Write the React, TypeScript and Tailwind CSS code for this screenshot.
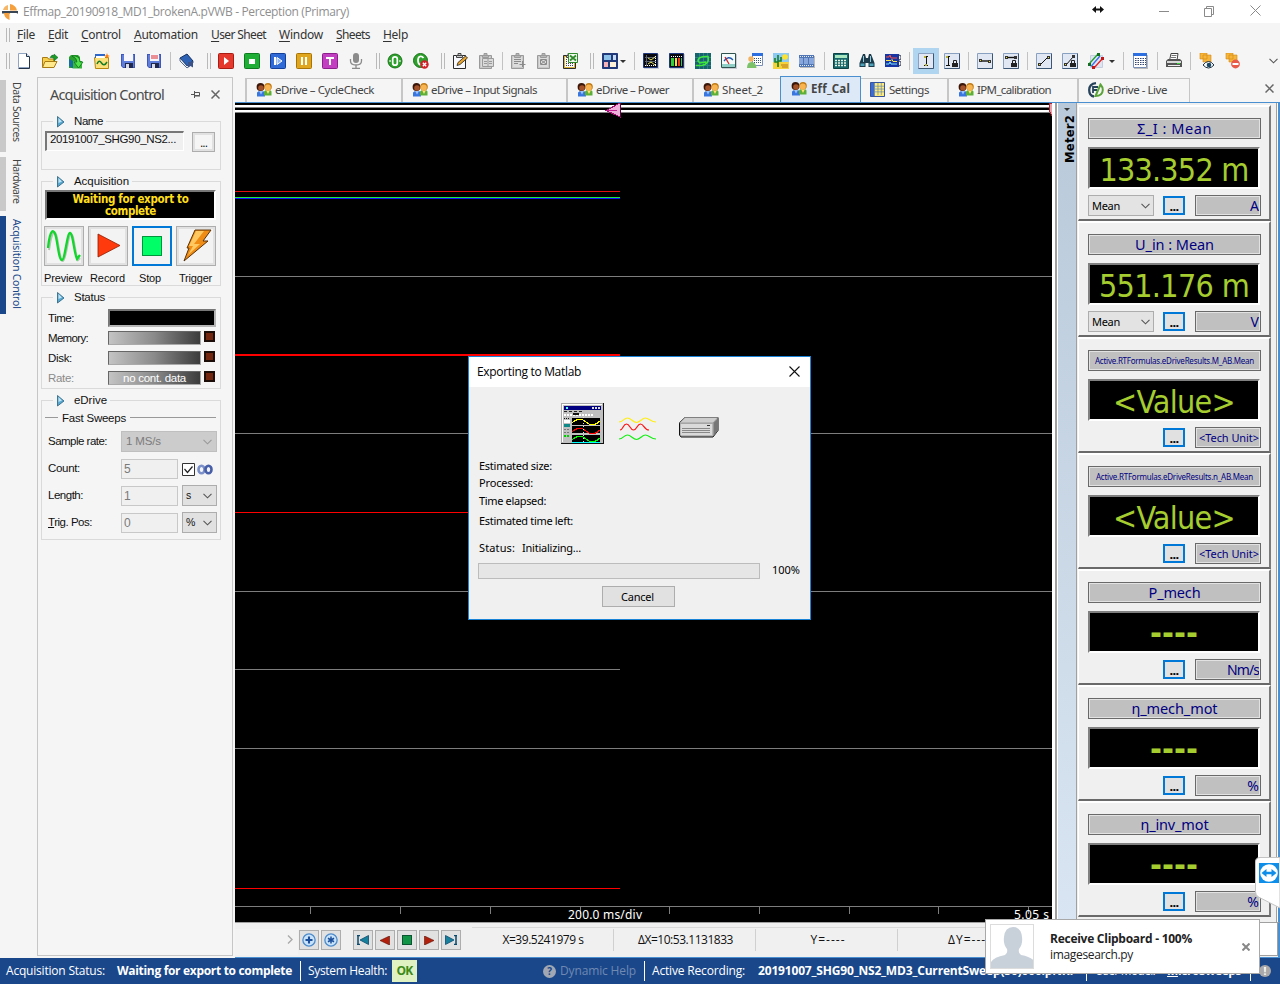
import React, { useLayoutEffect, useRef } from 'react';

const TAHOMA = "font-['Noto_Sans','DejaVu_Sans',sans-serif]";
const CONDENSED = "font-['DejaVu_Sans_Condensed','DejaVu_Sans','Noto_Sans',sans-serif]";
const SANS = "font-['Liberation_Sans',Arial,sans-serif]";
const SEGOE = "font-['Open_Sans','Noto_Sans',sans-serif]";

/* A single line of text whose tracking is adjusted so that it is w pixels long. */
function Fit({ w, className = '', children }: { w: number; className?: string; children: React.ReactNode }) {
  const ref = useRef<HTMLSpanElement>(null);
  useLayoutEffect(() => {
    const el = ref.current;
    if (!el) return;
    el.style.letterSpacing = '0px';
    const r = el.getBoundingClientRect();
    const n = (el.textContent || '').length;
    if (n > 1) el.style.letterSpacing = (w - Math.max(r.width, r.height)) / n + 'px';
  }, [w, children]);
  return (
    <span ref={ref} className={'inline-block shrink-0 whitespace-pre leading-none ' + className}>
      {children}
    </span>
  );
}

function Ico({ children, s = 16 }: { children: React.ReactNode; s?: number }) {
  return (
    <svg width={s} height={s} viewBox="0 0 16 16" className="block shrink-0">
      {children}
    </svg>
  );
}

const Floppy = ({ red }: { red?: boolean }) => (
  <Ico>
    <path d="M1 1h14v14H3l-2-2z" fill="#3f57b8" />
    <path d="M2 2h12v12H3l-1-1z" fill="#5f7ddb" />
    <path d="M4 1h9v7H4z" fill="#f6f6fc" />
    {red && <path d="M5 3h7M5 5h7" stroke="#e0282e" />}
    <path d="M5 10h8v5H5z" fill="#20284c" />
    <path d="M6 11h3v4H6z" fill="#d8dce8" />
  </Ico>
);
const Box = ({ top, bot, children }: { top: string; bot: string; children: React.ReactNode }) => (
  <Ico>
    <rect x="0.5" y="0.5" width="15" height="15" rx="1" fill={top} stroke={bot} />
    {children}
  </Ico>
);
const Clip = ({ grey, children }: { grey?: boolean; children?: React.ReactNode }) => (
  <Ico>
    <path d="M1.500 2.500h12v13h-12z" fill={grey ? '#c8c8c8' : '#d9b23a'} stroke={grey ? '#9a9a9a' : '#2b2b2b'} />
    <path d="M3 4h9v10H3z" fill={grey ? '#dcdcdc' : '#f8f9fd'} />
    <path d="M4.500 2.500h6v2h-6zM6 .5h3v2H6z" fill={grey ? '#b8b8b8' : '#ccc'} stroke={grey ? '#9a9a9a' : '#444'} />
    {children}
  </Ico>
);
const Cursor = ({ children, lock }: { children: React.ReactNode; lock?: boolean }) => (
  <Ico>
    <path d="M.5.5h15v15H.5z" fill="#e1e8f3" stroke="#8aa0c0" />
    <path d="M.5 15.500h15V.5" fill="none" stroke="#3c5676" />
    {children}
    {lock && (
      <>
        <path d="M8 10h6v4H8z" fill="#222" />
        <path d="M9.500 10V7.500h3V10" fill="none" stroke="#222" />
      </>
    )}
  </Ico>
);
const Screen = ({ children, c = '#07090f', b = '#20397e' }: { children: React.ReactNode; c?: string; b?: string }) => (
  <Ico>
    <path d="M1 1h15v15H1z" fill="#c9ccd4" />
    <path d="M.5.5h14v14H.5z" fill={c} stroke={b} />
    {children}
  </Ico>
);
const People = () => (
  <Ico>
    <path d="M1 14.500V10.500L3 9h4l2 1.500v4z" fill="#3a76e0" />
    <path d="M8 13.500V9.500L10 8h4l1.500 1.500v4z" fill="#5cb038" />
    <path d="M10 8h4l-2 4z" fill="#ffe27a" />
    <path d="M3 9h4l-2 3.500z" fill="#9dc4f5" />
    <circle cx="4.500" cy="5" r="3.900" fill="#3a1608" />
    <circle cx="5" cy="6" r="2.800" fill="#a3522a" />
    <circle cx="12" cy="4.800" r="3.800" fill="#c07a14" />
    <circle cx="11.800" cy="5.400" r="3" fill="#f7b450" />
  </Ico>
);

const icons: Record<string, React.ReactNode> = {
  newdoc: (
    <Ico>
      <path d="M2.500.5h8l3 3v11h-11z" fill="#fff" stroke="#8fa5c2" />
      <path d="M10.500.5v3h3" fill="#cfdcee" stroke="#24364e" />
      <path d="M13.500 4v11.500h-11" fill="none" stroke="#25344b" />
    </Ico>
  ),
  open: (
    <Ico>
      <path d="M.5 14V4.500h5l1 1.500H12v8z" fill="#f7cf4b" stroke="#a87a13" />
      <path d="M.5 14.500L3 8.500h12l-3 6z" fill="#ffe98c" stroke="#a87a13" />
      <path d="M8 4.500Q10 1 12 2.500V1l4 3.500L12 8V5.500Q10 4 8 4.500z" fill="#1b9a28" stroke="#08611a" strokeWidth=".5" />
    </Ico>
  ),
  import: (
    <Ico>
      <path d="M1 4l2-2h7l2 2v11H1z" fill="#2ba02f" />
      <path d="M1 6l4 2v7.500L1 13z" fill="#176e9c" />
      <path d="M5 8h9v7.500H5z" fill="#35b53b" />
      <path d="M4 3q8-1 8 6h3l-4.500 6L6 9h3q0-4-5-6z" fill="#4fe04a" stroke="#08611a" strokeWidth=".7" />
    </Ico>
  ),
  wavefolder: (
    <Ico>
      <path d="M.5 4.500h14v11h-13z" fill="#fbe07a" stroke="#b8860b" />
      <path d="M1 1h10v4H1z" fill="#2c67c9" />
      <path d="M2 3h9v2H2z" fill="#fff" />
      <path d="M3 11q2-5 4.500-1t5.500-1" fill="none" stroke="#167c26" strokeWidth="1.500" />
      <path d="M13 0l.8 2.200L16 3l-2.200.8L13 6l-.8-2.200L10 3l2.200-.8z" fill="#ff7a00" />
    </Ico>
  ),
  save: <Floppy />,
  saveas: <Floppy red />,
  book: (
    <Ico>
      <path d="M1 5l7-4 6 7-6 5z" fill="#2e62b4" stroke="#143060" />
      <path d="M1 5v3l7 7 6-5V8l-6 5z" fill="#e9eef6" stroke="#143060" strokeWidth=".7" />
      <path d="M9 9h5v5.500l-2.500-1.500L9 14.500z" fill="#3b5288" />
    </Ico>
  ),
  rec: <Box top="#e5392d" bot="#a81c14"><path d="M6 4v8l5-4z" fill="#fff" /></Box>,
  stop: <Box top="#1fae35" bot="#0c7a1e"><path d="M5 6h6v5H5z" fill="#fff" /></Box>,
  step: <Box top="#2f6ad6" bot="#123f99"><path d="M4 4h2v8H4z" fill="#fff" /><path d="M7 4.500v7L12 8z" fill="#8fb5f5" stroke="#fff" /></Box>,
  pause: <Box top="#e0a61d" bot="#a87406"><path d="M5 4h2v8H5zM9 4h2v8H9z" fill="#fff" /></Box>,
  trig: <Box top="#c33fc2" bot="#8d1f8d"><path d="M4 4h8v2H9v6H7V6H4z" fill="#fff" /></Box>,
  mic: (
    <Ico>
      <rect x="5" y="0" width="6" height="10" rx="3" fill="#8b8b8b" />
      <path d="M2.500 6v2q0 4 5.500 4t5.500-4V6M8 12v3M4 15.300h8" fill="none" stroke="#8b8b8b" strokeWidth="1.300" />
    </Ico>
  ),
  zero: (
    <Ico>
      <circle cx="8" cy="8" r="7" fill="#2ea12c" stroke="#187318" />
      <rect x="5.700" y="3.800" width="4.600" height="8.400" rx="2.300" fill="#2ea12c" stroke="#fff" strokeWidth="1.700" />
      <path d="M2.300 8h1.500M12.200 8h1.500" stroke="#fff" strokeWidth="1.500" />
    </Ico>
  ),
  zerox: (
    <Ico>
      <circle cx="7.500" cy="7.500" r="7" fill="#2ea12c" stroke="#187318" />
      <path d="M10.500 5Q9 3 7 3.500 5 4 5 7.500T7.500 12" fill="none" stroke="#fff" strokeWidth="1.800" />
      <circle cx="11.500" cy="11.500" r="4.200" fill="#cf2127" />
      <path d="M9.800 9.800l3.400 3.400M13.200 9.800l-3.400 3.400" stroke="#fff" strokeWidth="1.300" />
    </Ico>
  ),
  note: (
    <Ico>
      <path d="M1.500 2.500h12v13h-12z" fill="#f8f9fd" stroke="#2b2b2b" />
      <path d="M4.500 2.500h6v2h-6zM6 .5h3v2H6z" fill="#ccc" stroke="#444" />
      <path d="M5 12.500l1-3L13.500 3l2 2L8 11.500z" fill="#e9a52c" stroke="#222" strokeWidth=".8" />
    </Ico>
  ),
  pages: (
    <Clip grey>
      <path d="M4.500 5.500h11v8h-11zM10 5.500v8" fill="#dadada" stroke="#9a9a9a" />
      <path d="M6 8.500h3M6 10.500h3M11 8.500h3M11 10.500h3" stroke="#9a9a9a" />
    </Clip>
  ),
  clipadd: <Clip grey><path d="M4 6.500h7M4 8.500h7M4 10.500h4M12.500 8v6M9.500 11.500h6" stroke="#8a8a8a" /></Clip>,
  clipx: <Clip grey><path d="M4.500 6.500h6v5h-6zM5 7l5 4M10 7l-5 4" fill="none" stroke="#8a8a8a" /></Clip>,
  clipxl: (
    <Clip>
      <path d="M4 6.500h2M4 8.500h2M4 10.500h7M4 12.500h7" stroke="#444" strokeDasharray="1 1" />
      <path d="M6.500.5h9v9h-9z" fill="#f2f7ef" stroke="#2f8a2b" />
      <path d="M8 2.500l6 5M14 2.500l-6 5" stroke="#2f8a2b" strokeWidth="1.800" />
    </Clip>
  ),
  layout: (
    <Ico>
      <path d="M.5.5h15v15H.5z" fill="#22397a" stroke="#22397a" />
      <path d="M2 2h7v5H2z" fill="#8cc1ea" /><path d="M11 2h3v5h-3z" fill="#c5dcf4" />
      <path d="M2 9h4v5H2z" fill="#f6b2b6" /><path d="M8 9h6v5H8z" fill="#fff2d8" />
    </Ico>
  ),
  disp1: <Screen><path d="M3.500 2v11M2 4.500h11M2 8.500h11" stroke="#59616f" /><path d="M5 5l3 2 4-3M5 11l3-2 4 3" fill="none" stroke="#e7e35f" /><path d="M2 12.500h11M12.500 3v9" stroke="#fff" strokeDasharray="1 1" /></Screen>,
  disp2: <Screen><path d="M2 3.500h11" stroke="#fff" strokeDasharray="1 1" /><path d="M2 5h3v8H2z" fill="#2fd13a" /><path d="M6 5h2v8H6z" fill="#ffe12c" /><path d="M9 5h2v8H9z" fill="#f5351e" /><path d="M12 5h1v8h-1z" fill="#2fd13a" /></Screen>,
  disp3: <Ico><path d="M0 0h16v16H0z" fill="#16636b" /><path d="M4.500 0v16M8.500 0v16M12.500 0v16M0 4.500h16M0 8.500h16M0 12.500h16" stroke="#2c8088" /><path d="M1 12.500h6q8-2 6-9Q3 3 3 8l2 2 6-1" fill="none" stroke="#3de83a" strokeWidth="1.600" /></Ico>,
  gauge: <Screen c="#f4fbfb" b="#31534f"><path d="M1 11h13v3H1z" fill="#8fcfc8" /><path d="M3 8q4.500-6 9-1" fill="none" stroke="#2058b0" strokeWidth="1.300" /><path d="M4 4l4 7" stroke="#d92020" strokeWidth="1.300" /></Screen>,
  usertab: <Ico><path d="M5.500.5h10v12h-10z" fill="#fff" stroke="#7890b8" /><path d="M5 0h11v3H5z" fill="#2d6fe0" /><path d="M7 5.500h8M7 7.500h8M7 9.500h8" stroke="#34557f" strokeDasharray="1 1" /><circle cx="4" cy="6" r="2.700" fill="#f1b263" /><path d="M0 15q0-6 4.500-6T9.500 15z" fill="#7cc26b" /></Ico>,
  desert: <Ico><path d="M0 0h16v16H0z" fill="#8ccaf3" /><path d="M0 9h16v7H0z" fill="#f6d23a" /><circle cx="12" cy="4" r="2.800" fill="#ffe22b" /><path d="M5 2v12M2 5v4h3M8 4v4H5" fill="none" stroke="#197f25" strokeWidth="1.600" /><path d="M8 12h7M9 14h6" stroke="#b4761a" /></Ico>,
  film: <Ico><path d="M1 3h15v12H1z" fill="#bbb" /><path d="M0 2h15v12H0z" fill="#5076b6" /><path d="M1 3.500h13M1 12.500h13" stroke="#e3eaf6" strokeDasharray="1 1" /><path d="M0 5h4v6H0zM5 5h4v6H5zM10 5h5v6h-5z" fill="#86a6dc" /></Ico>,
  calc: <Ico><path d="M.5.5h15v15H.5z" fill="#17696b" stroke="#0c4445" /><path d="M2 2h12v3H2z" fill="#a8e6c0" /><path d="M2 7.500h12M2 10h12M2 12.500h12" stroke="#ecf4e4" strokeWidth="1.500" strokeDasharray="2 1" /></Ico>,
  binoc: <Ico><path d="M4 1h2l1 4h2l1-4h2l3.500 9v4h-6v-4H6.500v4h-6v-4z" fill="#1d3a4a" /><path d="M1.500 10.500h4v2.500h-4zM10.500 10.500h4v2.500h-4z" fill="#4da2bb" /><path d="M4.500 3v6M11.500 3v6" stroke="#8bcbdb" /></Ico>,
  multi: <Ico><path d="M0 1h14v13H0z" fill="#1736a4" /><path d="M1 4h3l1-2 1 3h6" fill="none" stroke="#ff5040" /><path d="M1 7.500h5l1-1 1 2h4" fill="none" stroke="#ffe64a" /><path d="M1 11h3l1-2 1 2h6" fill="none" stroke="#7ce6ff" /><path d="M14 2l2 1v3l-2 1M14 8l2 1v3l-2 1" fill="none" stroke="#333" /></Ico>,
  cur1: <Cursor><path d="M8.500 3v10M6 3.500h4M6 12.500h4" stroke="#111" /><path d="M6 3h2v2H6zM7 11h2v2H7z" fill="#b5ae31" /></Cursor>,
  cur2: <Cursor lock><path d="M4.500 3v10M2 3.500h4M2 12.500h4" stroke="#111" /><path d="M2 3h2v2H2z" fill="#b5ae31" /></Cursor>,
  cur3: <Cursor><path d="M3 8h10" stroke="#111" strokeWidth="1.400" /><path d="M2 6h3v3H2zM11 7h3v3h-3z" fill="#333" /><path d="M3 7h1v1H3zM12 8h1v1h-1z" fill="#e7df31" /></Cursor>,
  cur4: <Cursor lock><path d="M3 4.500h9" stroke="#111" strokeWidth="1.400" /><path d="M2 3h3v3H2zM11 3h3v3h-3z" fill="#333" /><path d="M3 4h1v1H3z" fill="#e7df31" /></Cursor>,
  cur5: <Cursor><path d="M4 12l8-8" stroke="#111" /><path d="M2 10h3v3H2zM11 3h3v3h-3z" fill="#333" /><path d="M3 11h1v1H3zM12 4h1v1h-1z" fill="#e7df31" /></Cursor>,
  cur6: <Cursor lock><path d="M4 12l7-8" stroke="#111" /><path d="M2 10h3v3H2zM10 2h3v3h-3z" fill="#333" /><path d="M3 11h1v1H3z" fill="#e7df31" /></Cursor>,
  slope: <Ico><path d="M2.500 2.500h12v12h-12z" fill="#dfe6f2" stroke="#c4cede" /><path d="M1 11L10 1" stroke="#1ca02c" strokeWidth="1.300" /><path d="M3 13.500L12 3" stroke="#3a6ee8" strokeWidth="1.300" /><path d="M6 15L15 5" stroke="#e82020" strokeWidth="1.300" /><path d="M0 10h3v3H0zM9 0h3v3H9z" fill="#146d20" /><path d="M4 13h3v3H4zM13 4h3v3h-3z" fill="#c01818" /></Ico>,
  table: <Ico><path d="M2 2h14v14H2z" fill="#bbb" /><path d="M1.500.5h13v14h-13z" fill="#fff" stroke="#7890b8" /><path d="M1 0h14v3H1z" fill="#2d6fe0" /><path d="M3 5.500h11M3 7.500h11M3 9.500h11M3 11.500h11" stroke="#34456f" strokeDasharray="1.500 1" /></Ico>,
  print: <Ico><path d="M5 .5h7l-1 7H3.500z" fill="#fff" stroke="#444" /><path d="M5.500 2.500h5M5 4.500h5" stroke="#777" /><path d="M0 8l2-2h12l2 2v6H0z" fill="#555" /><path d="M1 8h14v2H1z" fill="#d8d8d8" /><path d="M2 12h12v1H2z" fill="#eee" /><path d="M11 10h3v1h-3z" fill="#3d3" /></Ico>,
  eye: <Ico><path d="M1 0h7v6H1zM4 2h8v7H4z" fill="#f5b63a" stroke="#d38612" strokeWidth=".6" /><path d="M4 12q5.500-7 11 0-5.500 6-11 0z" fill="#fff" stroke="#1c2f3e" /><circle cx="10" cy="12" r="2.300" fill="#1c4a66" /></Ico>,
  noentry: <Ico><path d="M1 0h7v6H1zM4 2h8v7H4z" fill="#f5b63a" stroke="#d38612" strokeWidth=".6" /><circle cx="10.500" cy="11" r="4.400" fill="#e85a4a" /><path d="M7.500 10h6v2h-6z" fill="#fff" /></Ico>,
};

const I = (name: string, on = false) => (
  <div key={name} className={'flex h-[26px] w-[26px] shrink-0 items-center justify-center ' + (on ? 'bg-[#b0d5f0]' : '')}>
    {icons[name]}
  </div>
);
const Sep = ({ w = 'w-[7px]' }: { w?: string }) => (
  <div className={'flex shrink-0 justify-center ' + w}>
    <div className="h-[18px] w-px bg-[#c2c2c2]" />
  </div>
);
const Grip = ({ w = 'w-[13px]' }: { w?: string }) => (
  <div className={'flex shrink-0 justify-center ' + w}>
    <div className="ml-1 h-[16px] w-[4px] border-x border-[#b9b9b9]" />
  </div>
);
const Caret = () => <div className="h-0 w-0 border-x-[3px] border-t-[3px] border-x-transparent border-t-[#333]" />;
const Chevron = ({ c = '#555' }: { c?: string }) => (
  <svg width="9" height="6" viewBox="0 0 9 6" className="shrink-0"><path d="M.5.8l4 4 4-4" fill="none" stroke={c} strokeWidth="1.100" /></svg>
);

const menus: [string, number, string][] = [
  ['File', 18, 'w-[31px]'], ['Edit', 20, 'w-[33px]'], ['Control', 40, 'w-[53px]'], ['Automation', 64, 'w-[77px]'],
  ['User Sheet', 55, 'w-[68px]'], ['Window', 44, 'w-[57px]'], ['Sheets', 34, 'w-[47px]'], ['Help', 25, 'w-[38px]'],
];

function Group({ title, tw, h, children }: { title: string; tw: number; h: string; children: React.ReactNode }) {
  return (
    <section className={'mb-[11px] ml-[3px] w-[180px] border border-[#dadada] ' + h}>
      <div className="-mt-[8px] ml-[11px] flex h-[16px] w-fit items-center bg-[#f5f5f5] pl-[4px] pr-[3px]">
        <svg width="8" height="12" viewBox="0 0 8 12" className="mr-[9px] -mt-px"><path d="M.5.5v10.500L7 6z" fill="#58a8d0" stroke="#27607f" strokeWidth=".8" /><path d="M1.500 2v5L5 5.500z" fill="#bfe4f5" /></svg>
        <Fit w={tw} className="text-[11.5px]">{title}</Fit>
      </div>
      {children}
    </section>
  );
}

const Person = () => (
  <svg width="44" height="44" viewBox="0 0 44 44"><path d="M0 44v-7q3-5 14-7 3-2 2-6-4-5-3-12 1-10 9-10t9 10q1 7-3 12-1 4 2 6 11 2 14 7v7z" fill="#c8d0da" /></svg>
);

function Meter({ title, tw, ts, value, vw, unit, uw, us, combo }: {
  title: string; tw: number; ts: string; value: string; vw: number; unit: string; uw: number; us: string; combo?: boolean;
}) {
  return (
    <div className="h-[116px] w-[193px] shrink-0 border-b-2 border-l border-r-2 border-t-2 border-b-[#696969] border-l-white border-r-[#7b7b7b] border-t-white bg-[#f0f0f0] pl-[9px] pt-[11px]">
      <div className="flex h-[21px] w-[173px] items-center justify-center border border-[#696969] bg-[#c0c0c0] text-[#000080] outline outline-[#e2e2e2] -outline-offset-2">
        <Fit w={tw} className={ts}>{title}</Fit>
      </div>
      <div className={'mt-[8px] flex h-[42px] w-[172px] items-center justify-center border-2 border-b-white border-l-[#808080] border-r-white border-t-[#808080] bg-black text-[#a5cd2f] ' + CONDENSED}>
        <Fit w={vw} className={value === '----' ? 'mt-[1px] text-[32px] font-bold' : 'mt-[3px] text-[32px]'}>{value}</Fit>
      </div>
      <div className="mt-[6px] flex h-[21px] w-[173px] items-center">
        {combo ? (
          <div className="flex h-[21px] w-[66px] items-center justify-between border border-[#adadad] bg-[#e3e3e3] px-[3px] text-black">
            <Fit w={28} className="text-[11px]">Mean</Fit>
            <Chevron />
          </div>
        ) : <div className="w-[66px]" />}
        <div className="ml-[9px] flex h-[19px] w-[22px] items-end justify-center border-2 border-[#0078d7] bg-[#e1e1e1]">
          <Fit w={11} className="text-[13px] font-bold text-black">...</Fit>
        </div>
        <div className="ml-[10px] flex h-[21px] w-[66px] items-center justify-end border border-[#696969] bg-[#c0c0c0] pr-px text-[#000080] outline outline-[#e2e2e2] -outline-offset-2">
          <Fit w={uw} className={us}>{unit}</Fit>
        </div>
      </div>
    </div>
  );
}

const meters = [
  { title: 'Σ_I : Mean', tw: 75, ts: 'text-[14.5px]', value: '133.352 m', vw: 149, unit: 'A', uw: 8, us: 'text-[14px]', combo: true },
  { title: 'U_in : Mean', tw: 79, ts: 'text-[14.5px]', value: '551.176 m', vw: 150, unit: 'V', uw: 8, us: 'text-[14px]', combo: true },
  { title: 'Active.RTFormulas.eDriveResults.M_AB.Mean', tw: 159, ts: 'text-[8px]', value: '<Value>', vw: 122, unit: '<Tech Unit>', uw: 60, us: 'text-[11px]' },
  { title: 'Active.RTFormulas.eDriveResults.n_AB.Mean', tw: 157, ts: 'text-[8px]', value: '<Value>', vw: 122, unit: '<Tech Unit>', uw: 60, us: 'text-[11px]' },
  { title: 'P_mech', tw: 52, ts: 'text-[14.5px]', value: '----', vw: 48, unit: 'Nm/s', uw: 32, us: 'text-[14px]' },
  { title: 'η_mech_mot', tw: 86, ts: 'text-[14.5px]', value: '----', vw: 48, unit: '%', uw: 14, us: 'text-[14px]' },
  { title: 'η_inv_mot', tw: 68, ts: 'text-[14.5px]', value: '----', vw: 48, unit: '%', uw: 14, us: 'text-[14px]' },
];

function Tab({ w, pl, tw, label }: { w: string; pl: string; tw: number; label: string }) {
  return (
    <div className={'flex h-[24px] shrink-0 items-center border-l-2 border-t border-[#c6c6c6] pb-[1px] text-[#444] ' + w + ' ' + pl}>
      <People />
      <Fit w={tw} className="ml-[3px] text-[11.5px]">{label}</Fit>
    </div>
  );
}

function PlotArea() {
  return (
    <svg width="817" height="819" viewBox="235 103 817 819" shapeRendering="crispEdges" className="block bg-black">
      <path d="M235 105h817v2H235zM235 110h817v2H235z" fill="#fff" />
      <path d="M235 107h817v1H235zM235 112h817v1H235z" fill="#808080" />
      <path d="M235 276.500h817M235 433.500h817M235 591.500h817M235 669.500h385M235 748.500h817M235 906.500h817" stroke="#7d7d7d" />
      <path d="M310.500 907v7M400.500 907v7M490.500 907v7M580.500 907v7M669.500 907v7M759.500 907v7M849.500 907v7M938.500 907v7M1028.500 907v7" stroke="#7d7d7d" />
      <path d="M235 191.500h385" stroke="#e01010" />
      <path d="M235 197.500h385" stroke="#20e840" />
      <path d="M235 198.500h385" stroke="#1010ff" />
      <path d="M235 354h385v2H235zM235 512h385v1H235zM235 888h385v1H235z" fill="#f00" />
      <path d="M606 110.500l14-7.500v14z" fill="#f0b0dc" stroke="#a01070" />
      <path d="M606 110.500h11" stroke="#c02090" />
      <path d="M620.500 103v14" stroke="#600040" />
      <path d="M1049 103h3v13l-3-6z" fill="#e4a0a8" stroke="#b02030" />
      <text x="568" y="919" fontSize="12" fill="#fff" textLength="74" className={TAHOMA}>200.0 ms/div</text>
      <text x="1014" y="919" fontSize="12" fill="#fff" textLength="35" className={TAHOMA}>5.05 s</text>
    </svg>
  );
}

function NavBtn({ children, cls = '' }: { children: React.ReactNode; cls?: string }) {
  return <div className={'flex h-[20px] w-[20px] shrink-0 items-center justify-center border border-[#adadad] bg-[#e1e1e1] ' + cls}>{children}</div>;
}

const BigBtn = ({ on, children }: { on?: boolean; children: React.ReactNode }) => (
  <div className={'flex h-[40px] w-[40px] items-center justify-center bg-[#f3f3f3] ' + (on ? 'border-2 border-[#0078d7]' : 'border border-[#adadad] outline-2 -outline-offset-3 outline-[#e1e1e1]')}>{children}</div>
);

function StatusRow({ label, w, grey, text }: { label: string; w: number; grey?: boolean; text?: string }) {
  return (
    <div className="flex h-[20px] items-center pl-[6px]">
      <div className={'flex w-[60px] pt-[1px] ' + (grey ? 'text-[#8a8a8a]' : '')}><Fit w={w} className="text-[11.5px]">{label}</Fit></div>
      <div className="flex h-[14px] w-[93px] items-center justify-center border border-b-[#aaa] border-l-[#666] border-r-[#aaa] border-t-[#666] bg-linear-to-r from-[#c4c4c4] via-[#8a8a8a] to-[#3c3c3c] text-white">
        {text && <Fit w={63} className="mt-[1px] text-[11.5px]">{text}</Fit>}
      </div>
      <div className="mb-[3px] ml-[3px] h-[11px] w-[11px] border-2 border-[#1c0d08] bg-[#72260f]" />
    </div>
  );
}

const Field = ({ v }: { v: string }) => (
  <div className="flex h-[20px] w-[57px] items-center border border-[#c8c8c8] bg-[#f0f0f0] pl-[2px] text-[12px] text-[#7a7a7a]">{v}</div>
);
const SmallCombo = ({ v }: { v: string }) => (
  <div className="ml-[4px] flex h-[21px] w-[35px] items-center justify-between border border-[#adadad] bg-[#e1e1e1] pl-[3px] pr-[4px] text-[10.5px]">{v}<Chevron /></div>
);
const FormRow = ({ label, w, children }: { label: React.ReactNode; w: number; children: React.ReactNode }) => (
  <div className="flex h-[27px] items-center pl-[6px]">
    <div className="flex w-[73px]"><Fit w={w} className="text-[11.5px]">{label}</Fit></div>
    {children}
  </div>
);

const Divider = ({ cls }: { cls: string }) => <div className={'h-[20px] w-px shrink-0 bg-white ' + cls} />;

export default function App() {
  return (
    <div className={'relative flex h-[984px] w-[1280px] flex-col overflow-hidden bg-[#f5f5f5] text-[#111] ' + TAHOMA}>
      {/* title bar */}
      <header className="flex h-[23px] shrink-0 items-center bg-white pl-[2px]">
        <svg width="16" height="16" viewBox="0 0 16 16">
          <path d="M7 6.500V0Q1 1 0 6.500z" fill="#fff" /><path d="M8 6.500V0q6 1 7 6.500z" fill="#f5a03c" />
          <path d="M6 6V1Q2 2 1 6z" fill="#f7b566" />
          <path d="M0 7h16v2.500H0z" fill="#3a4654" /><path d="M8 9v7q6-1 7-7z" fill="#fff" /><path d="M7.500 9H2q0 5 5.500 7z" fill="#f5a03c" />
        </svg>
        <Fit w={326} className={'ml-[5px] mt-[1px] text-[12px] text-[#8f8f8f] ' + SEGOE}>Effmap_20190918_MD1_brokenA.pVWB - Perception (Primary)</Fit>
        <svg width="12" height="9" viewBox="0 0 12 9" className="ml-[743px] mb-[5px]"><path d="M0 4.500L4 1v2.500h4V1l4 3.500L8 8V5.500H4V8z" fill="#111" /></svg>
        <svg width="104" height="12" viewBox="0 0 104 12" className="ml-[54px] mb-[1px]" fill="none" stroke="#8a8a8a">
          <path d="M1 6.500h10M46.500 3.500h7v8h-7zM48.500 3V1.500h7v8H54M92.500.5l10 10M102.500.5l-10 10" />
        </svg>
      </header>

      {/* menu bar */}
      <nav className="flex h-[24px] shrink-0 items-center text-[#333]">
        <div className="ml-[6px] mr-[7px] h-[14px] w-[4px] border-x border-[#b9b9b9]" />
        {menus.map(([m, w, cls]) => (
          <div key={m} className={'flex ' + cls}>
            <Fit w={w} className="text-[12px]"><span className="underline underline-offset-2">{m[0]}</span>{m.slice(1)}</Fit>
          </div>
        ))}
      </nav>

      {/* tool bar */}
      <div className="flex h-[30px] shrink-0 items-center pb-[2px]">
        <Grip w="w-[11px]" />
        {['newdoc', 'open', 'import', 'wavefolder', 'save', 'saveas'].map((n) => I(n))}
        <Sep w="w-[7px]" />{I('book')}<Grip />
        {['rec', 'stop', 'step', 'pause', 'trig', 'mic'].map((n) => I(n))}
        <Grip />{I('zero')}{I('zerox')}<Grip />
        {I('note')}{I('pages')}<Sep w="w-[6px]" />
        {['clipadd', 'clipx', 'clipxl'].map((n) => I(n))}
        <Grip w="w-[14px]" />{I('layout')}
        <div className="-ml-[3px] w-[11px]"><Caret /></div><Sep />
        {['disp1', 'disp2', 'disp3', 'gauge', 'usertab', 'desert', 'film'].map((n) => I(n))}
        <Sep w="w-[8px]" />{['calc', 'binoc', 'multi'].map((n) => I(n))}
        <Sep />{I('cur1', true)}{I('cur2')}<Sep />{I('cur3')}{I('cur4')}<Sep />{I('cur5')}{I('cur6')}{I('slope')}
        <div className="w-[11px]"><Caret /></div><Sep />{I('table')}<Sep w="w-[8px]" />{I('print')}<Sep />{I('eye')}{I('noentry')}
        <div className="ml-[23px]"><Chevron /></div>
      </div>

      <main className="flex h-[881px] shrink-0">
        {/* docked panel tabs */}
        <aside className="flex w-[37px] shrink-0 flex-col pt-[3px] text-[#444]">
          <div className="mb-[5px] flex h-[72px] border-l-6 border-[#c9c9c9] pl-[5px] pt-[2px]"><Fit w={65} className="[writing-mode:vertical-rl] text-[10.5px]">Data Sources</Fit></div>
          <div className="mb-[5px] flex h-[54px] border-l-6 border-[#c9c9c9] pl-[5px] pt-[2px]"><Fit w={48} className="[writing-mode:vertical-rl] text-[10.5px]">Hardware</Fit></div>
          <div className="flex h-[98px] border-l-6 border-[#1a478a] pl-[5px] pt-[3px] text-[#1a478a]"><Fit w={91} className="[writing-mode:vertical-rl] text-[10.5px]">Acquisition Control</Fit></div>
        </aside>

        {/* acquisition control */}
        <aside className={'h-[879px] w-[196px] shrink-0 border border-[#c6c6c6] bg-[#f5f5f5] ' + SANS}>
          <div className={'flex h-[43px] items-start pl-[12px] pt-[9px] text-[#4a4a4a] ' + TAHOMA}>
            <Fit w={114} className="text-[14.5px]">Acquisition Control</Fit>
            <svg width="9" height="7" viewBox="0 0 9 7" className="ml-[27px] mt-[4px]" fill="none" stroke="#555"><path d="M0 3.500h3M3.500 0v7M4 1.500h4.500v3H4M4 5h5" /></svg>
            <svg width="9" height="9" viewBox="0 0 9 9" className="ml-[11px] mt-[3px]" stroke="#666" strokeWidth="1.500"><path d="M.5.5l8 8M8.500.5l-8 8" /></svg>
          </div>
          <Group title="Name" tw={29} h="h-[49px]">
            <div className="flex pl-[3px] pt-[1px]">
              <div className="flex h-[20px] w-[139px] items-center border-b border-r border-l-2 border-t-2 border-b-white border-l-[#777] border-r-white border-t-[#777] bg-[#f0f0f0] pb-[3px] pl-[3px]"><Fit w={126} className="text-[11.5px]">20191007_SHG90_NS2...</Fit></div>
              <div className="ml-[8px] mt-px flex h-[20px] w-[23px] items-end justify-center border border-[#adadad] bg-[#f5f5f5] pb-[2px] outline-2 -outline-offset-3 outline-[#e1e1e1]"><Fit w={9} className="text-[12px]">...</Fit></div>
            </div>
          </Group>
          <Group title="Acquisition" tw={55} h="h-[105px]">
            <div className={'ml-[3px] flex h-[30px] w-[171px] flex-col items-center justify-center border-2 border-b-white border-l-[#777] border-r-white border-t-[#777] bg-black font-bold text-[#ffdf1a] ' + CONDENSED}>
              <Fit w={116} className="mt-[1px] text-[11.5px]">Waiting for export to</Fit>
              <Fit w={51} className="mt-[1px] text-[11.5px]">complete</Fit>
            </div>
            <div className="ml-[2px] mt-[6px] flex gap-[4px]">
              <BigBtn><svg width="34" height="34" viewBox="0 0 34 34" fill="none"><path d="M2 21C5 0 8 0 10 9s3 23 6 23 5-27 8-27 4 20 7 26l2-2" stroke="#9ab09a" strokeWidth="2" opacity=".7" /><path d="M1 19C3-1 7-1 9 8s3 23 6 23 5-27 8-27 4 20 7 26l3-4" stroke="#12d62b" strokeWidth="2.300" /></svg></BigBtn>
              <BigBtn><svg width="34" height="34" viewBox="0 0 34 34"><path d="M7 5v23l22-11.500z" fill="#ff3a0c" /><path d="M7 5v23M7 5l22 11.500L7 28" fill="none" stroke="#8f1c00" strokeWidth=".8" /></svg></BigBtn>
              <BigBtn on><div className="h-[20px] w-[20px] border border-[#00963b] bg-[#00ff66]" /></BigBtn>
              <BigBtn><svg width="34" height="34" viewBox="0 0 34 34"><path d="M16 1h16l-8 11h5L5 32l5-13H8z" fill="#f08c14" stroke="#5a3208" /><path d="M17 2h8L15 15h6L9 26l5-9h-4z" fill="#ffc860" /></svg></BigBtn>
            </div>
            <div className="mt-[7px] flex justify-between pl-[2px] pr-[8px]">
              <Fit w={38} className="text-[11px]">Preview</Fit><Fit w={35} className="ml-[2px] text-[11px]">Record</Fit>
              <Fit w={22} className="ml-[8px] text-[11px]">Stop</Fit><Fit w={33} className="ml-[12px] text-[11px]">Trigger</Fit>
            </div>
          </Group>
          <Group title="Status" tw={31} h="h-[92px]">
            <div className="mt-[2px] flex h-[20px] items-center pl-[6px]">
              <div className="flex w-[60px] pt-[1px]"><Fit w={26} className="text-[11.5px]">Time:</Fit></div>
              <div className="h-[18px] w-[108px] border-2 border-b-[#b5b5b5] border-l-[#777] border-r-[#b5b5b5] border-t-[#777] bg-black" />
            </div>
            <StatusRow label="Memory:" w={40} />
            <StatusRow label="Disk:" w={24} />
            <StatusRow label="Rate:" w={26} grey text="no cont. data" />
          </Group>
          <Group title="eDrive" tw={33} h="h-[140px]">
            <div className="mt-[3px] flex h-[14px] items-center pl-[3px]">
              <div className="mb-[4px] h-px w-[13px] bg-[#999]" /><Fit w={64} className="ml-[4px] mr-[4px] text-[11.5px]">Fast Sweeps</Fit><div className="mb-[4px] h-px w-[86px] bg-[#999]" />
            </div>
            <div className="mt-[2px]" />
            <FormRow label="Sample rate:" w={59}>
              <div className="flex h-[21px] w-[96px] items-center justify-between border border-[#bfbfbf] bg-[#cccccc] pl-[4px] pr-[4px] text-[#7b7b7b]"><Fit w={35} className="text-[11.5px]">1 MS/s</Fit><Chevron c="#999" /></div>
            </FormRow>
            <FormRow label="Count:" w={32}>
              <Field v="5" />
              <svg width="13" height="13" viewBox="0 0 13 13" className="ml-[4px] mt-[1px]"><path d="M.5.5h12v12H.5z" fill="#fff" stroke="#333" /><path d="M2.500 6l3 3.500 5-6" fill="none" stroke="#222" strokeWidth="1.200" /></svg>
              <svg width="16" height="11" viewBox="0 0 16 11" className="ml-[2px] mt-[1px]" fill="none" strokeWidth="2.600"><ellipse cx="4.500" cy="5.500" rx="3" ry="3.800" stroke="#7b90c8" /><ellipse cx="11.500" cy="5.500" rx="3" ry="3.800" stroke="#465fa8" /></svg>
            </FormRow>
            <FormRow label="Length:" w={35}><Field v="1" /><SmallCombo v="s" /></FormRow>
            <FormRow label={<><span className="underline">T</span>rig. Pos:</>} w={44}><Field v="0" /><SmallCombo v="%" /></FormRow>
          </Group>
        </aside>

        <section className="ml-[2px] flex w-[1045px] flex-col">
          {/* sheet tabs */}
          <div className="flex h-[26px] shrink-0 items-end border-b border-[#4a90d0] pl-[10px]">
            <Tab w="w-[156px]" pl="pl-[9px]" tw={99} label="eDrive – CycleCheck" />
            <Tab w="w-[165px]" pl="pl-[9px]" tw={106} label="eDrive – Input Signals" />
            <Tab w="w-[126px]" pl="pl-[9px]" tw={73} label="eDrive – Power" />
            <Tab w="w-[88px]" pl="pl-[9px]" tw={41} label="Sheet_2" />
            <div className="flex h-[26px] w-[81px] shrink-0 items-center border border-b-0 border-[#4a90d0] bg-[#dde9f6] pb-[1px] pl-[10px] text-[#444]">
              <People /><Fit w={39} className="ml-[4px] text-[11.5px] font-bold">Eff_Cal</Fit>
            </div>
            <div className="flex h-[24px] w-[86px] shrink-0 items-center border-t border-[#c6c6c6] pb-[2px] pl-[9px] text-[#444]">
              <Ico s={15}><path d="M.5.5h15v15H.5z" fill="#ffec7a" stroke="#23459c" /><path d="M1 1h4v14H1z" fill="#3d6bd0" /><path d="M5 4.500h10M5 7.500h10M5 10.500h10M8.500 1v13M12 1v13" stroke="#5a80b8" strokeWidth=".7" /></Ico>
              <Fit w={40} className="ml-[4px] text-[11.5px]">Settings</Fit>
            </div>
            <Tab w="w-[130px]" pl="pl-[9px]" tw={74} label="IPM_calibration" />
            <div className="flex h-[24px] w-[113px] shrink-0 items-center border-l-2 border-r border-t border-[#c6c6c6] pb-[1px] pl-[9px] text-[#444]">
              <Ico><path d="M8 1.200Q1.200 2 1.200 8T6 14.500" fill="none" stroke="#28445c" strokeWidth="2.300" /><path d="M5 11V5h5M5 8h4" fill="none" stroke="#28445c" strokeWidth="1.800" /><path d="M12.500 2.500L7.500 14q7 0 7.300-6 0-3-2.300-5.500z" fill="none" stroke="#5aa339" strokeWidth="2" /></Ico>
              <Fit w={60} className="ml-[3px] text-[11.5px]">eDrive - Live</Fit>
            </div>
            <svg width="9" height="9" viewBox="0 0 9 9" className="mb-[9px] ml-[75px]" stroke="#666" strokeWidth="1.500"><path d="M.5.5l8 8M8.500.5l-8 8" /></svg>
          </div>

          <div className="flex h-[819px] shrink-0">
            <PlotArea />
            <div className="h-full w-[3px] bg-white" />
            <div className="h-full w-[2px] bg-[#a0a0a0]" />
            <div className="h-full w-px bg-white" />
            <div className="flex h-full w-[18px] flex-col items-center bg-linear-to-b from-[#b9c9d9] to-[#d9e5f2] pt-[5px]">
              <Caret />
              <div className="-mt-[2px] ml-[4px] rotate-180"><Fit w={48} className={'[writing-mode:vertical-rl] text-[13px] font-bold text-black ' + CONDENSED}>Meter2</Fit></div>
            </div>
            <div className="h-full w-px bg-[#a0a0a0]" />
            <div className="flex h-full w-[200px] flex-col border-r border-[#a0a0a0] bg-[#f0f0f0] pl-px pt-[2px]">
              {meters.map((m) => <Meter key={m.title} {...m} />)}
            </div>
            <div className="h-full w-px bg-white" />
            <div className="h-full w-[2px] bg-[#4a90d0]" />
          </div>

          {/* cursor bar */}
          <div className="flex h-[36px] shrink-0 border-b border-r-2 border-t border-[#4a90d0] border-t-[#a0a0a0] bg-[#f0f0f0]">
            <div className="mt-[6px] flex h-[26px] w-[63px] items-center justify-end bg-[#f3f3f3] pb-[5px] pr-[5px]">
              <svg width="6" height="9" viewBox="0 0 6 9"><path d="M1 .5l4 4-4 4" fill="none" stroke="#aaa" strokeWidth="1.400" /></svg>
            </div>
            <div className="flex items-start pl-[1px] pt-[7px]">
              <NavBtn><Ico s={14}><circle cx="8" cy="8" r="7" fill="#c9e3fa" stroke="#4d8ccc" strokeWidth="1.500" /><path d="M4 8h8M8 4v8" stroke="#1b4f9c" strokeWidth="2.400" /></Ico></NavBtn>
              <NavBtn cls="ml-[2px]"><Ico s={14}><circle cx="8" cy="8" r="7" fill="#c9e3fa" stroke="#4d8ccc" strokeWidth="1.500" /><path d="M8 4v8M4.500 6l7 4M11.500 6l-7 4" stroke="#1b4f9c" strokeWidth="1.700" /></Ico></NavBtn>
              <NavBtn cls="ml-[12px]"><svg width="12" height="10" viewBox="0 0 12 10"><path d="M1 0v10M0 .5h3M0 9.500h3" stroke="#0b4a6e" strokeWidth="1.500" /><path d="M11.500.5v9L3 5z" fill="#18809c" stroke="#0b4a6e" strokeWidth=".8" /></svg></NavBtn>
              <NavBtn cls="ml-[2px]"><svg width="10" height="9" viewBox="0 0 10 9"><path d="M9.500 0v9L0 4.500z" fill="#b3200c" stroke="#5c1006" strokeWidth=".6" /></svg></NavBtn>
              <NavBtn cls="ml-[2px]"><div className="h-[10px] w-[10px] border border-[#0b5530] bg-[#129447]" /></NavBtn>
              <NavBtn cls="ml-[2px]"><svg width="10" height="9" viewBox="0 0 10 9"><path d="M.5 0v9L10 4.500z" fill="#b3200c" stroke="#5c1006" strokeWidth=".6" /></svg></NavBtn>
              <NavBtn cls="ml-[2px]"><svg width="12" height="10" viewBox="0 0 12 10"><path d="M11 0v10M9 .5h3M9 9.500h3" stroke="#0b4a6e" strokeWidth="1.500" /><path d="M.5.5v9L9 5z" fill="#18809c" stroke="#0b4a6e" strokeWidth=".8" /></svg></NavBtn>
            </div>
            <div className="ml-[11px] mt-[4px] flex h-[28px] w-[781px] border-t border-[#d9d9d9] pt-[1px] text-[12px]">
              <div className="flex h-[22px] w-[142px] items-center justify-center border-r border-[#d0d0d0] pl-px"><Fit w={81} className={SEGOE}>X=39.5241979 s</Fit></div>
              <div className="flex h-[22px] w-[142px] items-center justify-center border-r border-[#d0d0d0] pl-[2px]"><Fit w={95} className={SEGOE}>ΔX=10:53.1131833</Fit></div>
              <div className="flex h-[22px] w-[142px] items-center justify-center border-r border-[#d0d0d0] pl-[3px]"><Fit w={35} className={SEGOE}>Y=----</Fit></div>
              <div className="flex h-[22px] w-[142px] items-center pl-[50px]"><Fit w={43} className={SEGOE}>ΔY=----</Fit></div>
            </div>
            <div className="mb-[1px] flex-1 border-b border-r border-[#a0a0a0] bg-white" />
          </div>
        </section>
      </main>

      {/* status bar */}
      <footer className={'flex h-[26px] shrink-0 items-center bg-[#1a478a] pl-[6px] text-[12px] text-white ' + SEGOE}>
        <Fit w={99}>Acquisition Status:</Fit>
        <Fit w={175} className="ml-[12px] font-bold">Waiting for export to complete</Fit>
        <Divider cls="ml-[8px] mr-[7px]" />
        <Fit w={79}>System Health:</Fit>
        <div className="ml-[5px] flex h-[22px] w-[25px] items-center justify-center bg-[#e0f2c2] font-bold text-[#3d8a18]"><Fit w={16}>OK</Fit></div>
        <div className="ml-[126px] flex h-[13px] w-[13px] items-center justify-center rounded-full bg-[#a2a8b3] text-[10px] font-bold text-[#1a478a]">?</div>
        <Fit w={76} className="ml-[4px] text-[#6f89b2]">Dynamic Help</Fit>
        <Divider cls="ml-[8px] mr-[7px]" />
        <Fit w={93}>Active Recording:</Fit>
        <Fit w={318} className="ml-[13px] font-bold">20191007_SHG90_NS2_MD3_CurrentSweep(50)000.pNRF</Fit>
        <Divider cls="ml-[10px] mr-[8px]" />
        <Fit w={60}>User Model:</Fit>
        <Fit w={74} className="ml-[12px] font-bold"><span className="underline">M</span>icroSweeps</Fit>
        <Divider cls="ml-[9px] mr-[8px]" />
        <div className="flex h-[12px] w-[12px] items-center justify-center rounded-full bg-[#a9a9a9] text-[10px] font-bold text-white">!</div>
      </footer>

      {/* export dialog */}
      <div className="absolute left-[468px] top-[356px] flex h-[264px] w-[343px] flex-col border border-[#1883d7] bg-[#f0f0f0] text-black">
        <div className="flex h-[30px] shrink-0 items-center justify-between bg-white pb-[1px] pl-[8px] pr-[10px]">
          <Fit w={104} className={'text-[12px] ' + SEGOE}>Exporting to Matlab</Fit>
          <svg width="11" height="11" viewBox="0 0 11 11" stroke="#111" strokeWidth="1.100"><path d="M.5.5l10 10M10.500.5l-10 10" /></svg>
        </div>
        <div className="flex h-[58px] items-start pl-[92px] pt-[16px]">
          <svg width="43" height="41" viewBox="0 0 43 41" shapeRendering="crispEdges">
            <path d="M0 0h43v41H0z" fill="#c0c0c0" /><path d="M42.500 0v41M0 40.500h43" stroke="#111" /><path d="M.5 40V.5H42" fill="none" stroke="#a8a8a8" /><path d="M1.500 39V1.500H41" fill="none" stroke="#fff" />
            <path d="M3 3h37v4H3z" fill="#000080" /><path d="M5 4h2v2H5z" fill="#5ff" /><path d="M31 5h8" stroke="#ddd" strokeWidth="2" strokeDasharray="2 1" />
            <path d="M3 8.500h19" stroke="#222" strokeDasharray="3 2" /><path d="M3 11.500h30" stroke="#fff" strokeWidth="2" strokeDasharray="2 1" /><path d="M12 11h6" stroke="#111" strokeWidth="2" />
            <path d="M3 15h5" stroke="#111" strokeDasharray="1 1" /><path d="M3 17h6v3H3z" fill="#fff" /><path d="M3 21h6v3H3z" fill="#188" /><path d="M3 26.500h6M3 29.500h6" stroke="#777" strokeDasharray="2 1" />
            <path d="M3 33h6" stroke="#0c0" strokeWidth="2" strokeDasharray="2 1" />
            <path d="M11 15h28v7H11zM11 23h28v7H11zM11 32h28v7H11z" fill="#000" />
            <g fill="none"><path d="M11 20q7-7 14-1t14-1" stroke="#ff0" /><path d="M11 29q7-7 14-1t14-1" stroke="#f00" /><path d="M11 37q7-7 14-1t14-1" stroke="#0f0" /></g>
            <path d="M22.500 14v25" stroke="#ddd" strokeDasharray="1 2" /><path d="M11 39.500h28" stroke="#0ff" />
          </svg>
          <svg width="38" height="25" viewBox="0 0 38 25" className="ml-[15px] mt-[14px]" fill="none" strokeWidth="1.200">
            <path d="M0 5C4 5 5 1 8.500 1S14 5.500 17.500 5.500 23 1 26.500 1 32 5 37 5" stroke="#ffee10" />
            <path d="M1 13C4 13 4 7 7.500 7S11 13 14.500 13 18 7 21.500 7 25 13 30 13" stroke="#f11" />
            <path d="M0 22c4 0 5-4 8.500-4s5.500 4.500 9 4.500 5.500-4.500 9-4.500 5.500 4 10.500 4" stroke="#1e1" />
          </svg>
          <svg width="40" height="21" viewBox="0 0 40 21" className="ml-[22px] mt-[14px]">
            <path d="M.5 5.500L6 .5h33v13L34 20H2L.5 18z" fill="#b6b6b6" stroke="#111" /><path d="M.5 6L6 .5h33l-5 5.500z" fill="#cdcdcd" stroke="#888" strokeWidth=".7" /><path d="M34.500 6v13l5-6V1z" fill="#777" />
            <path d="M2 7h31v11H2z" fill="#dadada" /><path d="M3 11.500h28M3 13.500h28M3 15.500h28" stroke="#888" /><path d="M28 8.500h3" stroke="#333" />
          </svg>
        </div>
        <div className="flex flex-col pl-[10px] text-[11px]">
          <div className="mt-[12px] flex h-[17px] items-center"><Fit w={73}>Estimated size:</Fit></div>
          <div className="flex h-[17px] items-center"><Fit w={54}>Processed:</Fit></div>
          <div className="flex h-[18px] items-center"><Fit w={67}>Time elapsed:</Fit></div>
          <div className="mt-[2px] flex h-[18px] items-center"><Fit w={94}>Estimated time left:</Fit></div>
          <div className="mt-[9px] flex h-[18px] items-center"><Fit w={36}>Status:</Fit><Fit w={59} className="ml-[7px]">Initializing...</Fit></div>
        </div>
        <div className="mt-[7px] flex h-[16px] items-center pl-[9px]">
          <div className="h-[16px] w-[282px] shrink-0 border border-[#bcbcbc] bg-[#e6e6e6]" />
          <Fit w={28} className="mb-[3px] ml-[12px] text-[11px]">100%</Fit>
        </div>
        <div className="ml-[133px] mt-[7px] flex h-[21px] w-[73px] items-center justify-center border border-[#adadad] bg-[#e1e1e1] pr-[2px]"><Fit w={33} className="text-[11px]">Cancel</Fit></div>
      </div>

      {/* remote session flap */}
      <svg width="25" height="54" viewBox="0 0 25 54" className="absolute left-[1255px] top-[857px]">
        <path d="M25 .5H5Q.5.500.5 5v30q0 3 3 5L25 51z" fill="#fff" stroke="#c4c4c4" />
        <path d="M4 6h20v20H4z" fill="#0e8ee9" /><circle cx="14" cy="16" r="8.800" fill="#fff" />
        <path d="M6.500 16l5-4v2.700h5V12l5 4-5 4v-2.700h-5V20z" fill="#0e8ee9" />
      </svg>

      {/* notification */}
      <div className="absolute left-[985px] top-[919px] flex h-[55px] w-[275px] border border-[#a8a8a8] bg-white">
        <div className="ml-[4px] mt-[4px] h-[45px] w-[44px] overflow-hidden border border-[#dcdcdc]"><Person /></div>
        <div className={'ml-[16px] flex w-[190px] flex-col items-start pt-[13px] text-[12px] text-[#222] ' + SEGOE}>
          <Fit w={142} className="font-bold">Receive Clipboard - 100%</Fit>
          <Fit w={83} className="mt-[4px]">imagesearch.py</Fit>
        </div>
        <svg width="8" height="8" viewBox="0 0 8 8" className="mt-[23px] ml-[2px]" stroke="#888" strokeWidth="2"><path d="M.5.5l7 7M7.500.5l-7 7" /></svg>
      </div>
    </div>
  );
}
